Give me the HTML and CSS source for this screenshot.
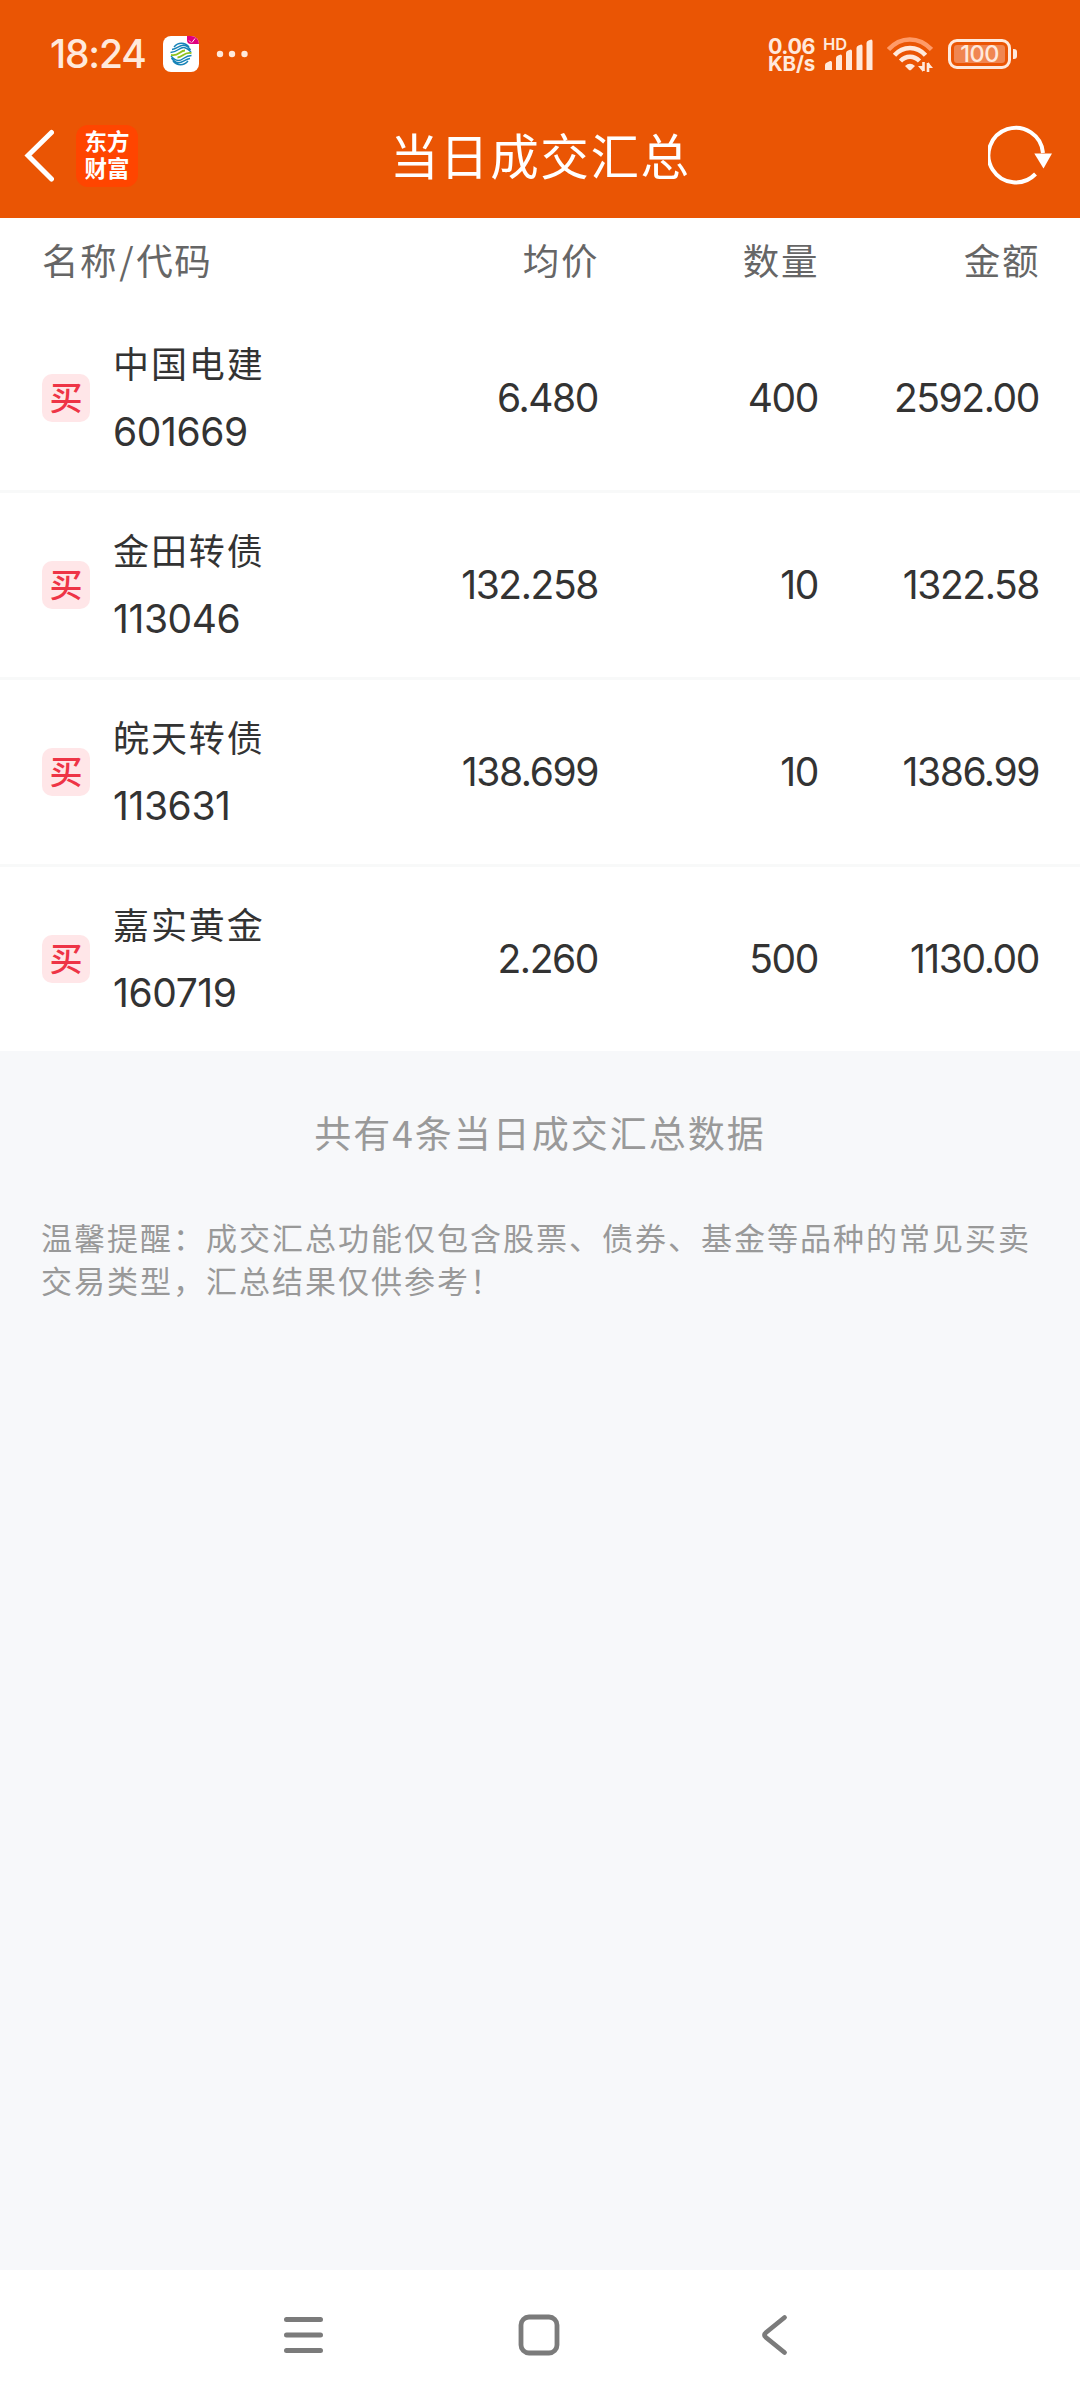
FILE: index.html
```html
<!DOCTYPE html>
<html lang="zh-CN">
<head>
<meta charset="utf-8">
<title>当日成交汇总</title>
<link rel="stylesheet" href="styles.css">
</head>
<body>
<div class="screen">
  <header class="top">
    <div class="status">
      <div class="status-left">
        <span class="clock">18:24</span>
        <svg class="carrier" width="36" height="36" viewBox="0 0 36 36">
          <rect width="36" height="36" rx="8" fill="#fff"/>
          <path d="M24 0h4a8 8 0 0 1 8 8h-8a4 4 0 0 1-4-4z" fill="#e0007f"/>
          <path d="M26 4.500l2 2M29 6.500l3-4" stroke="#fff" stroke-width=".9"/>
          <g fill="none" stroke-width="1.400">
            <path d="M11 11C15 6 22 6 26 11M9 13.500c5-.5 8-5 12-4.200 3 .4 5 2.500 6.500 4.700M7.500 16.500c7 0 9-5.500 13.500-5 3 .4 5 2.500 7 4.500" stroke="#1683b8"/>
            <path d="M10 25c4 5 11 5 15 0M27 22.500c-5 .5-8 5-12 4.200-3-.4-5-2.500-6.500-4.700M28.500 19.500c-7 0-9 5.500-13.500 5-3-.4-5-2.500-7-4.500" stroke="#1683b8"/>
            <path d="M8 18.800c7 2 9-4.300 14-4.300M28.500 17.200c-7-2-9 4.300-14 4.300" stroke="#8ec21f" stroke-width="1.800"/>
          </g>
        </svg>
        <svg class="more" width="32" height="8" viewBox="0 0 32 8" fill="#ffe9dc"><circle cx="4" cy="4" r="3.200"/><circle cx="16" cy="4" r="3.200"/><circle cx="28.500" cy="4" r="3.200"/></svg>
      </div>
      <div class="status-right">
        <div class="speed"><span class="rate">0.06</span><span class="unit">KB/s</span></div>
        <div class="signal">
          <span class="hd">HD</span>
          <svg width="49" height="36" viewBox="0 0 49 36" fill="#ffe9dc"><path d="M1 34v-5q0-2 2-2.500l3-1.500q2-.5 2 1.500V34zM12 34V22q0-2 2-2.500l2-.8q2-.5 2 1.500V34zM22 34V17q0-2 2-2.500l2-.8q2-.5 2 1.500V34zM32.500 34V12q0-2 2-2.500l2-.8q2-.5 2 1.500V34zM42.500 34V7q0-2 2-2.500l2-.8q2-.5 2 1.500V34z"/></svg>
        </div>
        <svg class="wifi" width="46" height="36" viewBox="0 0 46 36" fill="none" stroke="#ffe9dc" stroke-width="4.500">
          <path d="M1.500 13.500C13.500 0 32 0 44.500 13.500" stroke="#ff9b68"/>
          <path d="M7.500 19.200C16 9.500 30 9.500 38.500 19.200M13.500 25c5.500-5.800 13.500-5.800 19 0"/>
          <path d="M18 30q5-4.500 10 0l-4 4q-1 .7-2 0z" fill="#ffe9dc" stroke="none"/>
          <path d="M36.500 26v9M41 36v-9" stroke-width="2.600"/><path d="M31 30h5v6zM46 32h-5v-6z" fill="#ffe9dc" stroke="none"/>
        </svg>
        <div class="battery"><span class="level">100</span></div>
        <span class="battery-tip"></span>
      </div>
    </div>
    <div class="titlebar">
      <svg class="back" width="32" height="54" viewBox="0 0 32 54" fill="none" stroke="#fff" stroke-width="5"><path d="M29.500 3.500L6 26.500 29.500 50" stroke-linecap="round"/></svg>
      <div class="logo"><span>东方</span><span>财富</span></div>
      <h1 class="title">当日成交汇总</h1>
      <svg class="refresh" width="68" height="62" viewBox="0 0 68 62" fill="none" stroke="#fff" stroke-width="4"><path d="M55 28a27.300 27.300 0 1 0-7.500 21"/><path d="M46.300 28.500h17.700L55.500 43.500z" fill="#fff" stroke="none"/></svg>
    </div>
  </header>

  <main class="content">
    <div class="columns cn">
      <span class="col-name">名称<span class="slash">/</span>代码</span><span class="col">均价</span><span class="col">数量</span><span class="col">金额</span>
    </div>
    <ul class="deals">
      <li class="deal"><span class="side">买</span><div class="stock"><span class="name cn">中国电建</span><span class="num">601669</span></div><span class="num">6.480</span><span class="num">400</span><span class="num">2592.00</span></li>
      <li class="deal"><span class="side">买</span><div class="stock"><span class="name cn">金田转债</span><span class="num">113046</span></div><span class="num">132.258</span><span class="num">10</span><span class="num">1322.58</span></li>
      <li class="deal"><span class="side">买</span><div class="stock"><span class="name cn">皖天转债</span><span class="num">113631</span></div><span class="num">138.699</span><span class="num">10</span><span class="num">1386.99</span></li>
      <li class="deal"><span class="side">买</span><div class="stock"><span class="name cn">嘉实黄金</span><span class="num">160719</span></div><span class="num">2.260</span><span class="num">500</span><span class="num">1130.00</span></li>
    </ul>
    <p class="summary cn">共有4条当日成交汇总数据</p>
    <p class="notice">温馨提醒：成交汇总功能仅包含股票、债券、基金等品种的常见买卖<br>交易类型，汇总结果仅供参考！</p>
  </main>

  <nav class="nav">
    <svg width="48" height="48" viewBox="0 0 48 48" stroke="#7b7b7b" stroke-width="5" stroke-linecap="round"><path d="M7.500 7.500h34M7.500 23h34M7.500 38.500h34"/></svg>
    <svg width="48" height="48" viewBox="0 0 48 48" fill="none" stroke="#7b7b7b" stroke-width="4.800"><rect x="6" y="5" width="36" height="36" rx="8"/></svg>
    <svg width="48" height="48" viewBox="0 0 48 48" fill="none" stroke="#7b7b7b" stroke-width="4.800" stroke-linecap="round" stroke-linejoin="round"><path d="M33.500 5.500L15 20.500q-3 2.500 0 5L33.500 40.500"/></svg>
  </nav>
</div>
</body>
</html>
```
FILE: styles.css
```css
* { box-sizing: border-box; margin: 0; padding: 0; }
body { font-family: "Inter", "Noto Sans CJK SC", sans-serif; background: #f7f8fa; }
svg { display: block; flex: none; }
.screen { width: 1080px; height: 2400px; display: flex; flex-direction: column; overflow: hidden; }
.cn { font-family: "Noto Sans CJK SC", sans-serif; }

.top { height: 218px; background: #ea5504; flex: none; color: #fff; }
.status { height: 108px; display: flex; justify-content: space-between; align-items: center; padding: 0 64px 0 49px; color: #ffe9dc; }
.status-left, .status-right { display: flex; align-items: center; }
.clock { width: 114px; font-size: 39px; font-weight: 500; letter-spacing: -1.200px; line-height: 48px; white-space: nowrap; padding-left: 1px; }
.more { margin-left: 17px; }
.speed { width: 56px; display: flex; flex-direction: column; font-size: 21.500px; font-weight: 700; line-height: 18px; white-space: nowrap; padding-top: 1px; }
.rate { letter-spacing: -.5px; }
.unit { font-size: 20.500px; letter-spacing: -.2px; }
.signal { position: relative; width: 63px; }
.hd { position: absolute; left: -1px; top: -1px; font-size: 16.500px; font-weight: 600; line-height: 18px; }
.battery { width: 63px; height: 30px; margin-left: 15px; border: 3px solid #ffe9dc; border-radius: 9px; padding: 3px; }
.level { display: block; height: 18px; border-radius: 3px; background: #f08651; text-align: center; font-size: 23.500px; font-weight: 500; line-height: 18px; letter-spacing: -.5px; }
.battery-tip { width: 4px; height: 10px; margin-left: 2px; border-radius: 0 3px 3px 0; background: #ffe9dc; margin-right: -1px; }
.titlebar { height: 110px; display: grid; grid-template-columns: 32px 62px 1fr 68px; align-items: center; padding: 0 24px 14px 22px; }
.logo { width: 62px; height: 62px; margin-left: 22px; border-radius: 12px; background: #ff4500; display: flex; flex-direction: column; align-items: center; justify-content: center; font-family: "Noto Sans CJK SC", sans-serif; font-weight: 700; font-size: 22.500px; line-height: 26.500px; white-space: nowrap; padding-bottom: 5px; }
.title { font-family: "Noto Sans CJK SC", sans-serif; font-weight: 400; font-size: 48.500px; letter-spacing: 1.600px; line-height: 60px; padding: 0 0 5px 274px; white-space: nowrap; }

.content { flex: 1; }
.columns { height: 88px; background: #fff; display: grid; grid-template-columns: 298px 258px 220px 221px; padding: 0 41px 4px 42px; align-items: center; color: #666; font-size: 36.500px; letter-spacing: 1.600px; line-height: 84px; }
.col { text-align: right; margin-right: -1px; }
.slash { padding: 0 1px; }
.deals { list-style: none; background: #fff; }
.deal { height: 187px; border-bottom: 3px solid #f8f9f9; display: grid; grid-template-columns: 48px 250px 258px 220px 221px; padding: 0 41px 0 42px; align-items: center; color: #333; }
.deal:last-child { height: 184px; border: 0; }
.deal > .num { text-align: right; letter-spacing: -1.400px; }
.num { font-size: 39px; line-height: 48px; letter-spacing: -.4px; }
.side { width: 48px; height: 48px; border-radius: 10px; background: #ffe6e8; color: #ee3446; font: 500 33px/44px "Noto Sans CJK SC", sans-serif; text-align: center; padding-bottom: 4px; }
.stock { display: flex; flex-direction: column; gap: 22px; padding: 0 0 2px 23px; }
.stock .num { padding-bottom: 0; }
.name { font-size: 36px; letter-spacing: 1.900px; line-height: 48px; }
.summary { padding-top: 57px; text-align: center; color: #999; font-size: 37px; letter-spacing: 2px; line-height: 48px; }
.notice { padding: 59px 0 0 41px; color: #999; font: 400 31px/43px "Noto Sans CJK SC", sans-serif; letter-spacing: 2px; white-space: nowrap; }
.nav { height: 130px; flex: none; background: #fff; display: flex; justify-content: space-between; align-items: center; padding: 2px 281px 0 279px; }
```
